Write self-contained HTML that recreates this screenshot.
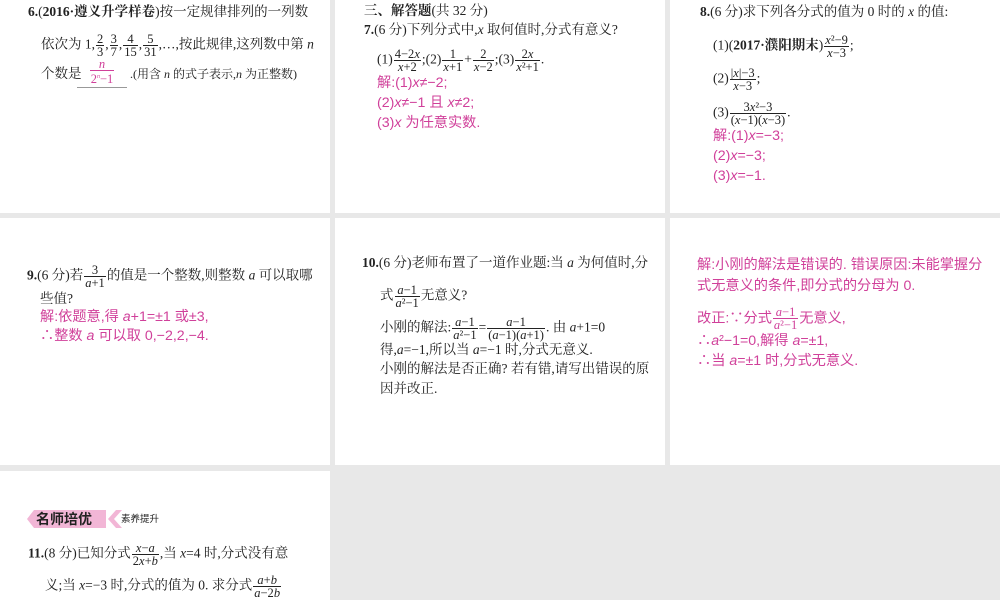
<!DOCTYPE html>
<html><head><meta charset="utf-8"><style>
body{margin:0;width:1000px;height:600px;background:#e8e8e8;position:relative;overflow:hidden;font-family:"Liberation Serif","Noto Serif CJK SC",serif;font-size:13.5px;color:#222}
.p{position:absolute;background:#fff}
.l{position:absolute;white-space:nowrap;line-height:16px}
.k{color:#d0409a;font-family:"Liberation Sans","Noto Sans CJK SC",sans-serif;font-size:14.2px}
.f{display:inline-block;vertical-align:middle;text-align:center;font-size:12.5px;line-height:12px;margin:0 1px;font-family:"Liberation Serif",serif}
.f>span{display:block;padding:0 1px}
.f>span:first-child{border-bottom:1px solid currentColor}
i{font-style:italic}
b{font-weight:bold}
</style></head><body>
<div class="p" style="left:0;top:0;width:330px;height:213px"></div>
<div class="p" style="left:335px;top:0;width:330px;height:213px"></div>
<div class="p" style="left:670px;top:0;width:330px;height:213px"></div>
<div class="p" style="left:0;top:218px;width:330px;height:247px"></div>
<div class="p" style="left:335px;top:218px;width:330px;height:247px"></div>
<div class="p" style="left:670px;top:218px;width:330px;height:247px"></div>
<div class="p" style="left:0;top:471px;width:330px;height:129px"></div>

<div class="l" style="left:28px;top:4px"><b>6.</b>(<b>2016·遵义升学样卷</b>)按一定规律排列的一列数</div>
<div class="l" style="left:41px;top:33px">依次为 1,<span class="f"><span>2</span><span>3</span></span>,<span class="f"><span>3</span><span>7</span></span>,<span class="f"><span>4</span><span>15</span></span>,<span class="f"><span>5</span><span>31</span></span>,…,按此规律,这列数中第 <i>n</i></div>
<div class="l" style="left:41px;top:66px">个数是</div>
<div class="l k" style="left:77px;top:58px;width:50px;border-bottom:1px solid #999;text-align:center;height:29px"><span class="f"><span><i>n</i></span><span>2<sup style="font-size:6px"><i>n</i></sup>−1</span></span></div>
<div class="l" style="left:130px;top:66px;font-size:12px">.(用含 <i>n</i> 的式子表示,<i>n</i> 为正整数)</div>

<div class="l" style="left:364px;top:3px"><b>三、解答题</b>(共 32 分)</div>
<div class="l" style="left:364px;top:22px"><b>7.</b>(6 分)下列分式中,<i>x</i> 取何值时,分式有意义?</div>
<div class="l" style="left:377px;top:48px">(1)<span class="f"><span>4−2<i>x</i></span><span><i>x</i>+2</span></span>;(2)<span class="f"><span>1</span><span><i>x</i>+1</span></span>+<span class="f"><span>2</span><span><i>x</i>−2</span></span>;(3)<span class="f"><span>2<i>x</i></span><span><i>x</i>²+1</span></span>.</div>
<div class="l k" style="left:377px;top:75px">解:(1)<i>x</i>≠−2;</div>
<div class="l k" style="left:377px;top:95px">(2)<i>x</i>≠−1 且 <i>x</i>≠2;</div>
<div class="l k" style="left:377px;top:115px">(3)<i>x</i> 为任意实数.</div>

<div class="l" style="left:700px;top:4px"><b>8.</b>(6 分)求下列各分式的值为 0 时的 <i>x</i> 的值:</div>
<div class="l" style="left:713px;top:34px">(1)(<b>2017·濮阳期末</b>)<span class="f"><span><i>x</i>²−9</span><span><i>x</i>−3</span></span>;</div>
<div class="l" style="left:713px;top:67px">(2)<span class="f"><span>|<i>x</i>|−3</span><span><i>x</i>−3</span></span>;</div>
<div class="l" style="left:713px;top:101px">(3)<span class="f"><span>3<i>x</i>²−3</span><span>(<i>x</i>−1)(<i>x</i>−3)</span></span>.</div>
<div class="l k" style="left:713px;top:128px">解:(1)<i>x</i>=−3;</div>
<div class="l k" style="left:713px;top:148px">(2)<i>x</i>=−3;</div>
<div class="l k" style="left:713px;top:168px">(3)<i>x</i>=−1.</div>

<div class="l" style="left:27px;top:264px"><b>9.</b>(6 分)若<span class="f"><span>3</span><span><i>a</i>+1</span></span>的值是一个整数,则整数 <i>a</i> 可以取哪</div>
<div class="l" style="left:40px;top:291px">些值?</div>
<div class="l k" style="left:40px;top:309px">解:依题意,得 <i>a</i>+1=±1 或±3,</div>
<div class="l k" style="left:40px;top:328px">∴整数 <i>a</i> 可以取 0,−2,2,−4.</div>

<div class="l" style="left:362px;top:255px"><b>10.</b>(6 分)老师布置了一道作业题:当 <i>a</i> 为何值时,分</div>
<div class="l" style="left:380px;top:284px">式<span class="f"><span><i>a</i>−1</span><span><i>a</i>²−1</span></span>无意义?</div>
<div class="l" style="left:380px;top:316px">小刚的解法:<span class="f"><span><i>a</i>−1</span><span><i>a</i>²−1</span></span>=<span class="f"><span><i>a</i>−1</span><span>(<i>a</i>−1)(<i>a</i>+1)</span></span>. 由 <i>a</i>+1=0</div>
<div class="l" style="left:380px;top:342px">得,<i>a</i>=−1,所以当 <i>a</i>=−1 时,分式无意义.</div>
<div class="l" style="left:380px;top:361px">小刚的解法是否正确? 若有错,请写出错误的原</div>
<div class="l" style="left:380px;top:381px">因并改正.</div>

<div class="l k" style="left:697px;top:257px">解:小刚的解法是错误的. 错误原因:未能掌握分</div>
<div class="l k" style="left:697px;top:278px">式无意义的条件,即分式的分母为 0.</div>
<div class="l k" style="left:697px;top:306px">改正:∵分式<span class="f"><span><i>a</i>−1</span><span><i>a</i>²−1</span></span>无意义,</div>
<div class="l k" style="left:697px;top:333px">∴<i>a</i>²−1=0,解得 <i>a</i>=±1,</div>
<div class="l k" style="left:697px;top:353px">∴当 <i>a</i>=±1 时,分式无意义.</div>

<svg style="position:absolute;left:26px;top:509px" width="96" height="20"><polygon points="8,1 80,1 80,19 8,19 1,10" fill="#f2b6d6"/><polygon points="90,1 96,1 88,10 96,19 90,19 82,10" fill="#f2b6d6"/></svg>
<div class="l" style="left:36px;top:511px;font-family:'Liberation Sans','Noto Sans CJK SC',sans-serif;font-weight:bold;font-size:14px;color:#222">名师培优</div>
<div class="l" style="left:121px;top:512px;font-size:9.5px;font-family:'Liberation Sans','Noto Sans CJK SC',sans-serif">素养提升</div>
<div class="l" style="left:28px;top:542px"><b>11.</b>(8 分)已知分式<span class="f"><span><i>x</i>−<i>a</i></span><span>2<i>x</i>+<i>b</i></span></span>,当 <i>x</i>=4 时,分式没有意</div>
<div class="l" style="left:45px;top:574px">义;当 <i>x</i>=−3 时,分式的值为 0. 求分式<span class="f"><span><i>a</i>+<i>b</i></span><span><i>a</i>−2<i>b</i></span></span></div>
</body></html>
